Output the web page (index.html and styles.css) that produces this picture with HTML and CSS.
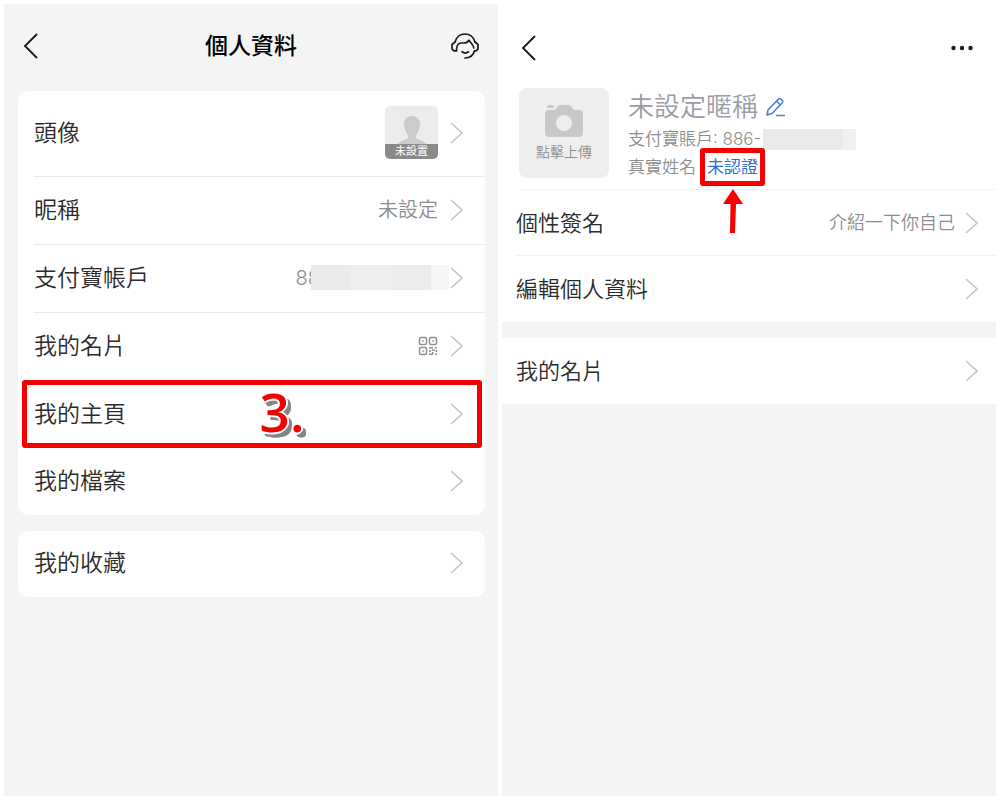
FILE: index.html
```html
<!DOCTYPE html>
<html lang="zh-Hant">
<head>
    <meta charset="UTF-8">
    <meta name="viewport" content="width=device-width, initial-scale=1.0">
    <title>個人資料</title>
    <link rel="stylesheet" href="styles.css">
</head>
<body>
    <!-- Shared icons -->
    <svg class="sprite" aria-hidden="true">
        <symbol id="chevron" viewBox="0 0 13 22">
            <path d="M1 1 L12 11 L1 21" fill="none" stroke="#c4c4c4" stroke-width="1.6"/>
        </symbol>
        <symbol id="back" viewBox="0 0 15 26">
            <path d="M14 1 L2 13 L14 25" fill="none" stroke="#1c1c1c" stroke-width="1.9"/>
        </symbol>
    </svg>

    <div class="screens">
        <!-- Personal info screen -->
        <main class="screen">
            <header class="topbar">
                <button class="icon-btn" aria-label="返回"><svg width="15" height="26"><use href="#back"/></svg></button>
                <h1>個人資料</h1>
                <button class="icon-btn" aria-label="客服">
                    <svg width="28" height="26" viewBox="0 0 28 26" fill="none" stroke="#1c1c1c" stroke-width="1.7" stroke-linecap="round" stroke-linejoin="round">
                        <path d="M4 9 C5.500 4 9.500 1 14 1 C18.500 1 22.500 4 24 9"/>
                        <path d="M5.500 17.800 H3 L1 16 V11.500 L4 9"/>
                        <path d="M24 9 L27 11.500 V16 L25 17.800 H23.500 C22.500 22 19 25 14 25"/>
                        <path d="M5.500 17.500 C5.500 12.500 7 10.300 10 10 H13 C15 10 16.800 9 18 7.200 C19 9.500 22.600 11.500 22.800 15"/>
                        <path d="M11 18.800 C13 20.300 15.500 20.300 17.500 18.800"/>
                    </svg>
                </button>
            </header>

            <nav class="card">
                <a class="row row-tall" href="#">
                    <span class="label">頭像</span>
                    <span class="thumb">
                        <svg width="36" height="32" viewBox="0 0 36 32" fill="#cbcbcb">
                            <path d="M18 1 C23 1 26 4.500 26 9 C26 14 24 17 22 20 V23 C27 26 33 27 35 32 H1 C3 27 9 26 14 23 V20 C12 17 10 14 10 9 C10 4.500 13 1 18 1 Z"/>
                        </svg>
                        <span class="thumb-text">未設置</span>
                    </span>
                    <svg class="arrow" width="13" height="22"><use href="#chevron"/></svg>
                </a>
                <a class="row line" href="#">
                    <span class="label">昵稱</span>
                    <span class="value">未設定</span>
                    <svg class="arrow" width="13" height="22"><use href="#chevron"/></svg>
                </a>
                <a class="row line" href="#">
                    <span class="label">支付寶帳戶</span>
                    <span class="value value-masked">88<span class="mask"></span></span>
                    <svg class="arrow" width="13" height="22"><use href="#chevron"/></svg>
                </a>
                <a class="row line" href="#">
                    <span class="label">我的名片</span>
                    <svg width="20" height="20" viewBox="0 0 20 20" fill="none" stroke="#8e8e8e" stroke-width="1.500">
                        <rect x="1.500" y="1.500" width="7" height="7" rx="1.500"/>
                        <rect x="11.500" y="1.500" width="7" height="7" rx="1.500"/>
                        <rect x="1.500" y="11.500" width="7" height="7" rx="1.500"/>
                        <path d="M4.200 5 H5.800 M14.200 5 H15.800 M4.200 15 H5.800"/>
                        <path d="M11 11.700 H15 M17 11.700 H19 M14 14 H17 M11 15 H13 M18.300 14 V16 M11 18.300 H15 M14.700 16 V18 M17 18.300 H19"/>
                    </svg>
                    <svg class="arrow" width="13" height="22"><use href="#chevron"/></svg>
                </a>
                <a class="row" href="#">
                    <span class="label">我的主頁</span>
                    <svg class="arrow" width="13" height="22"><use href="#chevron"/></svg>
                    <span class="step-box">3.</span>
                </a>
                <a class="row" href="#">
                    <span class="label">我的檔案</span>
                    <svg class="arrow" width="13" height="22"><use href="#chevron"/></svg>
                </a>
            </nav>

            <nav class="card">
                <a class="row" href="#">
                    <span class="label">我的收藏</span>
                    <svg class="arrow" width="13" height="22"><use href="#chevron"/></svg>
                </a>
            </nav>
        </main>

        <!-- My homepage screen -->
        <section class="screen home">
            <div class="panel">
                <header class="topbar">
                    <button class="icon-btn" aria-label="返回"><svg width="15" height="26"><use href="#back"/></svg></button>
                    <button class="icon-btn" aria-label="更多">
                        <svg width="22" height="6" viewBox="0 0 22 6" fill="#1c1c1c">
                            <circle cx="2.500" cy="3" r="2.200"/>
                            <circle cx="11" cy="3" r="2.200"/>
                            <circle cx="19.500" cy="3" r="2.200"/>
                        </svg>
                    </button>
                </header>

                <div class="profile">
                    <button class="upload">
                        <svg width="40" height="34" viewBox="0 0 40 34">
                            <rect x="3" y="1" width="7" height="3" rx="1.500" fill="#c8c8c8"/>
                            <path d="M5 6 H11 L14 2 Q15 1 17 1 H24 Q26 1 27 2 L30 6 H35 Q39 6 39 10 V29 Q39 33 35 33 H5 Q1 33 1 29 V10 Q1 6 5 6 Z" fill="#c8c8c8"/>
                            <circle cx="20" cy="19" r="8" fill="#eeeeee"/>
                        </svg>
                        點擊上傳
                    </button>
                    <div class="info">
                        <h2>未設定暱稱
                            <svg width="20" height="20" viewBox="0 0 20 20" fill="none" stroke="#4a82d2" stroke-width="1.600" stroke-linejoin="round">
                                <path d="M1 18 L2 13 L12.500 2 Q13.500 1 14.700 2 L16.300 3.500 Q17.300 4.600 16.300 5.700 L6 16.500 Z"/>
                                <path d="M10.500 4.200 L14 7.800 M10 18.500 H19"/>
                            </svg>
                        </h2>
                        <p>支付寶賬戶: 886-<span class="mask mask-short"></span></p>
                        <p>真實姓名
                            <a class="verify" href="#">未認證
                                <svg class="pointer" width="20" height="44" viewBox="0 0 20 44" fill="#f60000">
                                    <path d="M10 0 L20 15 H13 L12 44 H7 L7.500 15 H0 Z"/>
                                </svg>
                            </a>
                        </p>
                    </div>
                </div>

                <a class="row line" href="#">
                    <span class="label">個性簽名</span>
                    <span class="value">介紹一下你自己</span>
                    <svg class="arrow" width="13" height="22"><use href="#chevron"/></svg>
                </a>
                <a class="row" href="#">
                    <span class="label">編輯個人資料</span>
                    <svg class="arrow" width="13" height="22"><use href="#chevron"/></svg>
                </a>
            </div>
            <div class="panel">
                <a class="row" href="#">
                    <span class="label">我的名片</span>
                    <svg class="arrow" width="13" height="22"><use href="#chevron"/></svg>
                </a>
            </div>
        </section>
    </div>
</body>
</html>
```
FILE: styles.css
```css
/* General styling */
* {
    box-sizing: border-box;
}

body {
    margin: 0;
    background: #ffffff;
    color: #2b2b2b;
    font-family: Inter, "Noto Sans CJK TC", sans-serif;
    font-weight: 350;
}

h1, h2, p {
    margin: 0;
}

a {
    color: inherit;
    text-decoration: none;
}

button {
    border: none;
    background: none;
    padding: 0;
    font: inherit;
    color: inherit;
    cursor: pointer;
}

svg {
    display: block;
    flex: none;
}

.sprite {
    position: absolute;
    width: 0;
    height: 0;
}

/* Two phone screens side by side */
.screens {
    display: grid;
    grid-template-columns: 1fr 1fr;
    gap: 4px;
    min-height: 100vh;
    padding: 4px;
}

.screen {
    background: #f4f4f4;
}

/* Top bar */
.topbar {
    display: flex;
    justify-content: space-between;
    align-items: center;
    height: 83px;
    padding: 0 19px;
}

.topbar h1 {
    flex: 1;
    padding-left: 13px;
    font-size: 23px;
    font-weight: 500;
    line-height: 32px;
    text-align: center;
    color: #000000;
}

.icon-btn {
    display: flex;
}

/* Cards and rows */
.card {
    margin: 0 13px 16px 14px;
    background: #ffffff;
    border-radius: 10px;
}

.topbar + .card {
    margin-top: 4px;
}

.row {
    position: relative;
    display: flex;
    align-items: center;
    gap: 12px;
    height: 68px;
    padding: 0 22px 3px 16px;
}

.row:last-child {
    height: 66px;
}

.row-tall {
    height: 86px;
}

/* Separator above or below a row, starting at the label */
.line::before,
.home .line::after {
    content: "";
    position: absolute;
    top: -1px;
    left: 16px;
    right: 0;
    height: 1px;
    background: #e9e9e9;
}

.label {
    flex: 1;
    font-size: 23px;
    line-height: 32px;
}

.value {
    font-size: 20px;
    line-height: 28px;
    color: #8e8e8e;
}

.value-masked {
    display: flex;
    align-items: center;
    margin-right: -11px;
}

/* Hidden account digits */
.mask {
    width: 138px;
    height: 25px;
    margin-left: -9px;
    background: linear-gradient(to right, #eaeaea 40px, #eeeeee 40px 80px, #ebebeb 80px 120px, #f6f6f6 120px);
}

.mask-short {
    width: 93px;
    height: 21px;
    margin-left: 2px;
    background: linear-gradient(to right, #e9e9e9 80px, #efefef 80px);
}

/* Avatar thumbnail */
.thumb {
    display: flex;
    flex-direction: column;
    justify-content: flex-end;
    align-items: center;
    width: 53px;
    height: 53px;
    border-radius: 5px;
    overflow: hidden;
    background: #ececec;
}

.thumb-text {
    width: 100%;
    margin-top: -3px;
    background: #8a8a8a;
    color: #ffffff;
    font-size: 11px;
    font-weight: 400;
    line-height: 15px;
    text-align: center;
}

/* Step highlight */
.step-box {
    position: absolute;
    inset: -1px 3px 1px 4px;
    display: flex;
    justify-content: center;
    align-items: center;
    padding: 0 0 4px 60px;
    border: 5px solid #f60000;
    border-radius: 3px;
    color: #f60000;
    font-family: "Open Sans", sans-serif;
    font-size: 53px;
    font-weight: 600;
    line-height: 58px;
    text-shadow: 2px 0 #fff, -2px 0 #fff, 0 2px #fff, 0 -2px #fff,
        1px 1px #fff, -1px 1px #fff, 1px -1px #fff, -1px -1px #fff,
        4px 4px #858585, 5px 3px #858585, 3px 5px #858585, 5px 5px #858585;
}

/* Homepage screen */
.home .panel {
    background: #ffffff;
    margin-bottom: 16px;
}

.home .topbar {
    height: 84px;
    padding: 4px 23px 0 19px;
}

.profile {
    display: flex;
    gap: 19px;
    height: 102px;
    padding-left: 17px;
}

.upload {
    display: flex;
    flex-direction: column;
    justify-content: center;
    align-items: center;
    gap: 4px;
    width: 90px;
    height: 90px;
    border-radius: 8px;
    background: #eeeeee;
    color: #8e8e8e;
    font-size: 14px;
    line-height: 20px;
}

.info {
    padding-top: 1px;
    color: #8e8e8e;
    font-size: 17px;
    line-height: 28px;
}

.info h2 {
    display: flex;
    align-items: center;
    gap: 8px;
    color: #9c9ca4;
    font-size: 26px;
    font-weight: 350;
    line-height: 36px;
}

.info p {
    display: flex;
    align-items: center;
}

/* Unverified link with its frame */
.verify {
    position: relative;
    margin: -5px 0 -5px 4px;
    padding: 0 2px;
    border: 5px solid #f60000;
    border-radius: 3px;
    color: #2f6fd0;
    font-weight: 400;
}

.pointer {
    position: absolute;
    z-index: 1;
    top: 36px;
    left: 18px;
}

.home .row {
    gap: 10px;
    height: 66px;
    padding: 0 18px 0 14px;
}

.home .label {
    font-size: 22px;
}

.home .value {
    font-size: 18px;
}

.home .line::before {
    left: 18px;
    background: #f2f2f2;
}

.home .line::after {
    top: 65px;
    left: 14px;
    background: #f2f2f2;
}
```
